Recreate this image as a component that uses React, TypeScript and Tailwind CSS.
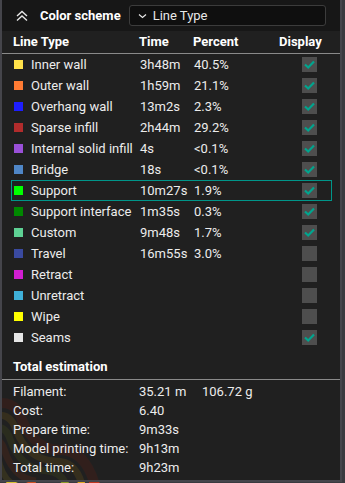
import React from "react";

const rows = [
  { name: "Inner wall", color: "#ffe14a", time: "3h48m", pct: "40.5%", on: true },
  { name: "Outer wall", color: "#ff7b33", time: "1h59m", pct: "21.1%", on: true },
  { name: "Overhang wall", color: "#1e1eff", time: "13m2s", pct: "2.3%", on: true },
  { name: "Sparse infill", color: "#b12c2c", time: "2h44m", pct: "29.2%", on: true },
  { name: "Internal solid infill", color: "#9a50d8", time: "4s", pct: "<0.1%", on: true },
  { name: "Bridge", color: "#4f86c6", time: "18s", pct: "<0.1%", on: true },
  { name: "Support", color: "#00ff00", time: "10m27s", pct: "1.9%", on: true, hl: true },
  { name: "Support interface", color: "#008800", time: "1m35s", pct: "0.3%", on: true },
  { name: "Custom", color: "#5ed194", time: "9m48s", pct: "1.7%", on: true },
  { name: "Travel", color: "#3a4aa0", time: "16m55s", pct: "3.0%", on: false },
  { name: "Retract", color: "#d21ed2", time: "", pct: "", on: false },
  { name: "Unretract", color: "#3fb0d8", time: "", pct: "", on: false },
  { name: "Wipe", color: "#ffff00", time: "", pct: "", on: false },
  { name: "Seams", color: "#e6e6e6", time: "", pct: "", on: true },
];

const totals: [string, string, string?][] = [
  ["Filament:", "35.21 m", "106.72 g"],
  ["Cost:", "6.40"],
  ["Prepare time:", "9m33s"],
  ["Model printing time:", "9h13m"],
  ["Total time:", "9h23m"],
];

function Check({ on }: { on: boolean }) {
  return (
    <div className="w-[15px] h-[15px] bg-[#4e4e4e] flex items-center justify-center">
      {on && (
        <svg width="13" height="13" viewBox="0 0 13 13">
          <path d="M2 6.5 L5.2 9.5 L11 3.5" fill="none" stroke="#00a58e" strokeWidth="2.2" />
        </svg>
      )}
    </div>
  );
}

export default function App() {
  return (
    <div
      className="relative w-[345px] h-[483px] overflow-hidden bg-[#3a3a3f] text-[#ececec]"
      style={{ fontFamily: "Roboto, 'Noto Sans', sans-serif" }}
    >
      <svg className="absolute left-0 top-[395px]" width="110" height="90" viewBox="0 0 110 90">
        <path d="M-10 10 Q15 2 22 25 Q35 55 60 55 Q85 55 95 90" fill="none" stroke="#c0361e" strokeWidth="10" />
        <path d="M-10 22 Q10 15 16 35 Q28 65 55 66 Q76 66 82 90" fill="none" stroke="#e0a820" strokeWidth="7" />
        <path d="M-10 34 Q5 28 10 44 Q20 74 48 76 Q62 78 66 90" fill="none" stroke="#8a9a28" strokeWidth="7" />
        <path d="M-10 46 Q0 42 4 54 Q14 84 36 86" fill="none" stroke="#d05020" strokeWidth="7" />
        <path d="M-10 60 Q-2 58 0 70 Q6 90 22 92" fill="none" stroke="#d8c030" strokeWidth="6" />
      </svg>
      <div className="relative w-[342px] h-[483px] pb-[2px]">
        <div className="w-[342px] h-[482px] bg-[#1c1c1c]/[0.88] border-l-2 border-r-2 border-b-2 border-[#45454b] flex flex-col">
          <div className="h-[31px] bg-[#121212]/[0.6] flex items-center">
            <svg className="ml-[13px]" width="14" height="12" viewBox="0 0 14 12">
              <path d="M2 6 L7 1.5 L12 6 M2 10.5 L7 6 L12 10.5" fill="none" stroke="#e8e8e8" strokeWidth="1.4" />
            </svg>
            <span className="ml-[11px] text-[13px] font-bold text-white">Color scheme</span>
            <div className="ml-[8px] w-[197px] h-[21px] rounded-[3px] border border-[#3c3c3c] bg-[#0f0f0f] flex items-center">
              <svg className="ml-[8px]" width="9" height="6" viewBox="0 0 9 6">
                <path d="M1 1.5 L4.5 4.5 L8 1.5" fill="none" stroke="#e8e8e8" strokeWidth="1.2" />
              </svg>
              <span className="ml-[6px] text-[13px] text-[#e8e8e8]">Line Type</span>
            </div>
          </div>
          <div className="h-[22px] flex items-center text-[13px] font-bold text-white">
            <span className="ml-[11px] w-[126px]">Line Type</span>
            <span className="w-[54px]">Time</span>
            <span className="w-[86px]">Percent</span>
            <span>Display</span>
          </div>
          <div className="h-px bg-[#8a8a8a]" />
          <div className="flex flex-col">
            {rows.map((r) => (
              <div
                key={r.name}
                className={`ml-[9px] w-[321px] h-[21px] grid grid-cols-[128px_54px_108px_15px] items-center text-[13px] border ${
                  r.hl ? "border-[#00968a]" : "border-transparent"
                }`}
              >
                <div className="flex items-center">
                  <div className="ml-[2px] w-[9px] h-[9px]" style={{ backgroundColor: r.color }} />
                  <span className="ml-[8px] whitespace-nowrap">{r.name}</span>
                </div>
                <span>{r.time}</span>
                <span>{r.pct}</span>
                <Check on={r.on} />
              </div>
            ))}
          </div>
          <div className="mt-[7px] h-[24px] flex items-center ml-[11px] text-[13px] font-bold text-white">
            Total estimation
          </div>
          <div className="h-px bg-[#8a8a8a]" />
          <div className="mt-[2px] flex flex-col">
            {totals.map(([k, v, w]) => (
              <div key={k} className="h-[19px] flex items-center text-[13px]">
                <span className="ml-[11px] w-[126px] whitespace-nowrap">{k}</span>
                <span className="w-[63px]">{v}</span>
                {w && <span>{w}</span>}
              </div>
            ))}
          </div>
        </div>
      </div>
    </div>
  );
}
